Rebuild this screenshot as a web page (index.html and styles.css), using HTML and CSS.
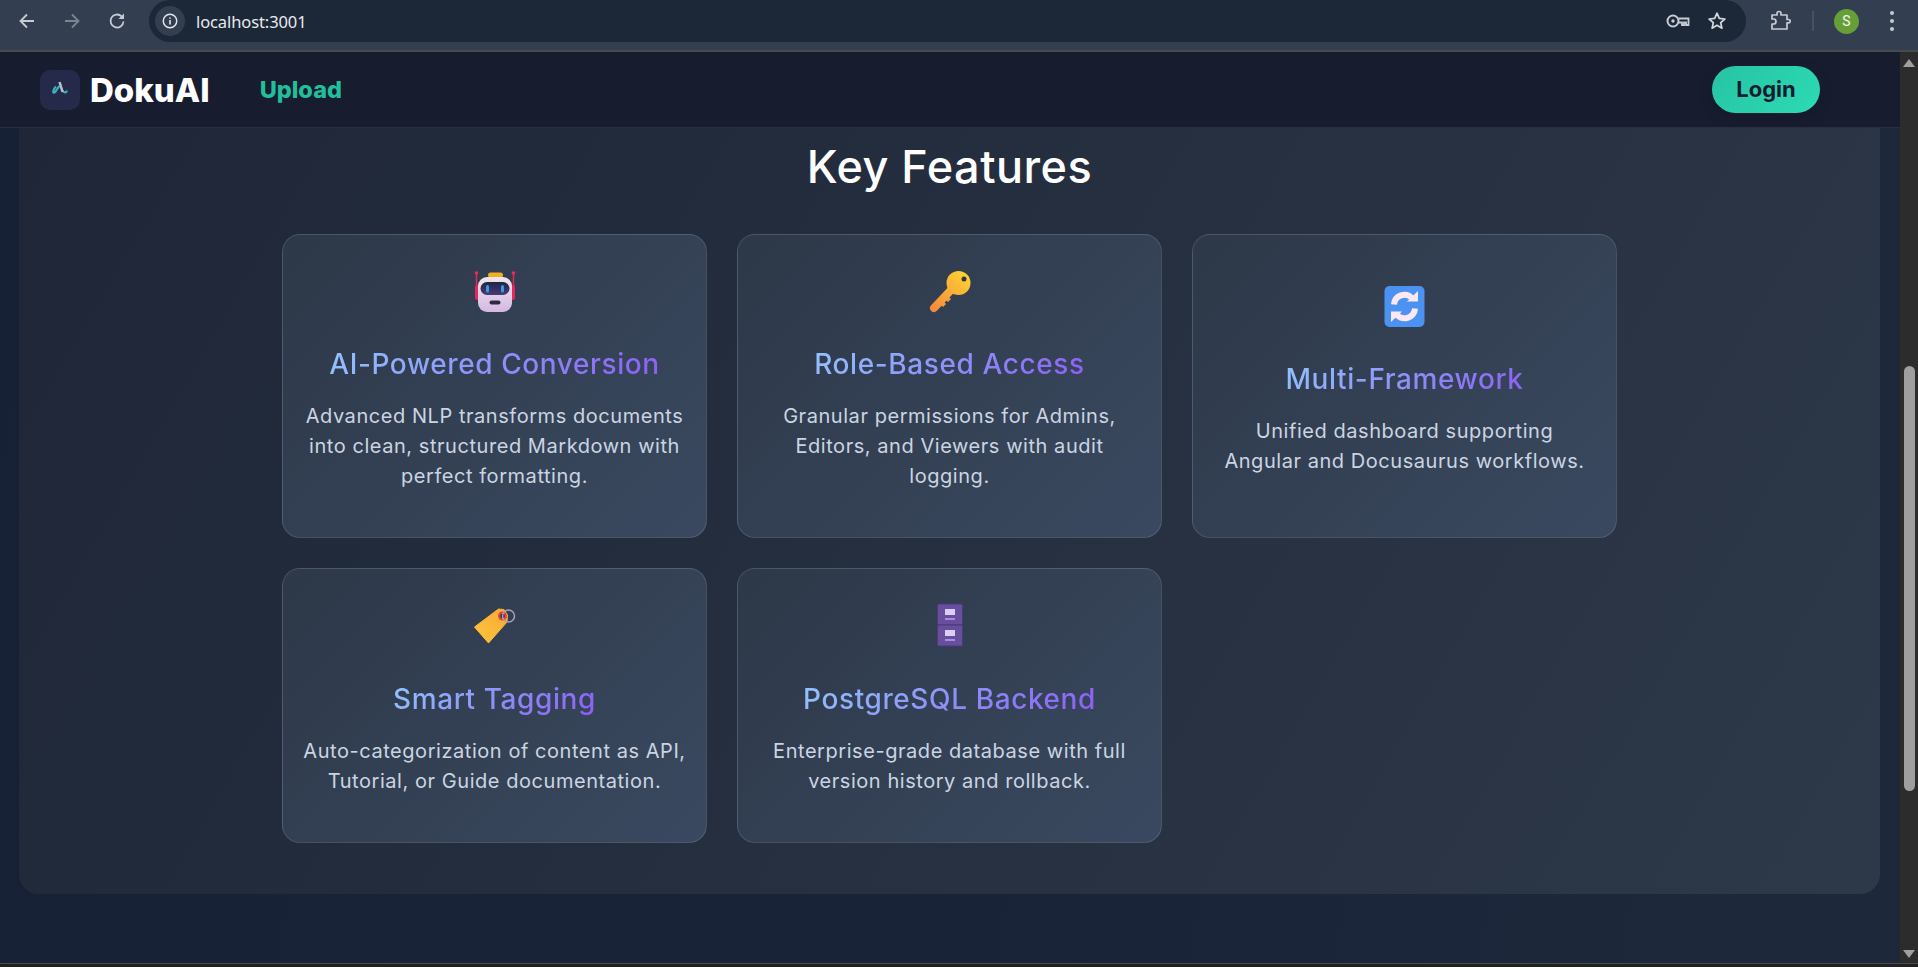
FILE: index.html
```html
<!DOCTYPE html>
<html lang="en">
    <head>
        <meta charset="UTF-8" />
        <meta name="viewport" content="width=device-width, initial-scale=1.0" />
        <title>DokuAI</title>
        <link rel="stylesheet" href="styles.css">
    </head>
    <body>
        <!-- browser toolbar -->
        <div class="chrome">
            <div class="chrome-nav">
                <svg class="chrome-icon" viewBox="0 0 20 20"><path d="M17 10H4M10 3.5 3.5 10l6.500 6.500" fill="none" stroke="#c7ccd4" stroke-width="1.800"/></svg>
                <svg class="chrome-icon" viewBox="0 0 20 20"><path d="M3 10h13M10 3.500l6.500 6.500-6.500 6.500" fill="none" stroke="#7b8491" stroke-width="1.800"/></svg>
                <svg class="chrome-icon" viewBox="0 0 20 20"><path d="M16.500 10.500a6.500 6.500 0 1 1-1.900-5.100L16.500 7.300" fill="none" stroke="#c7ccd4" stroke-width="1.800"/><path d="M17 2.500V8h-5.500z" fill="#c7ccd4"/></svg>
            </div>
            <div class="omnibox">
                <span class="site-info">
                    <svg viewBox="0 0 20 20" width="18" height="18"><circle cx="10" cy="10" r="7.500" fill="none" stroke="#e3e6ea" stroke-width="1.600"/><path d="M10 9v5M10 6v1.600" stroke="#e3e6ea" stroke-width="1.800"/></svg>
                </span>
                <span class="url">localhost:3001</span>
                <div class="omnibox-actions">
                    <svg width="24" height="16" viewBox="0 0 24 16"><circle cx="7" cy="8" r="5.500" fill="none" stroke="#c7ccd4" stroke-width="2"/><circle cx="7" cy="8" r="1.700" fill="#c7ccd4"/><path d="M12.500 5.500h10V12h-2.500v-2.500h-2V12h-2V9.500h-3.500" fill="none" stroke="#c7ccd4" stroke-width="1.800"/></svg>
                    <svg width="20" height="20" viewBox="0 0 20 20"><path d="m10 2.200 2.300 5.200 5.600.6-4.200 3.700 1.200 5.500L10 14.300l-4.900 2.900 1.200-5.500L2.100 8l5.600-.6z" fill="none" stroke="#d3d7dd" stroke-width="1.700" stroke-linejoin="round"/></svg>
                </div>
            </div>
            <div class="chrome-tools">
                <svg width="22" height="22" viewBox="0 0 22 22"><path d="M3 5h5V3.500a2 2 0 0 1 4 0V5h6v4.500h1.500a1.700 1.700 0 0 1 0 3.400H18V19H3v-5h1.500a2.500 2.500 0 0 0 0-5H3z" fill="none" stroke="#c7ccd4" stroke-width="1.700" stroke-linejoin="round"/></svg>
                <span class="tool-divider"></span>
                <span class="avatar">S</span>
                <span class="kebab"><i></i><i></i><i></i></span>
            </div>
        </div>

        <div class="viewport">
            <div class="page">
                <header class="site-header">
                    <div class="brand">
                        <span class="brand-mark">
                            <svg width="40" height="40" viewBox="0 0 40 40">
                                <path d="M16 16.500c-1.500 1.200-2.500 3-2.800 5-.1 1.300.8 1.600 2 .5l4-6" fill="none" stroke="#3cb4bd" stroke-width="2.200"/>
                                <path d="M20 13c1 4 2 9 5 9.500 1 .1 1.800-.6 1.800-2" fill="none" stroke="#3cb4bd" stroke-width="2"/>
                                <path d="M19.500 12 22.500 22" fill="none" stroke="#b9bec8" stroke-width="2.400"/>
                            </svg>
                        </span>
                        <span class="brand-name">DokuAI</span>
                    </div>
                    <a class="nav-link" href="#">Upload</a>
                    <button class="login-btn">Login</button>
                </header>

                <main class="content">
                    <section class="features">
                        <h2 class="features-title">Key Features</h2>
                        <div class="feature-grid">
                            <div class="feature-card">
                                <div class="feature-icon">
                                    <svg width="48" height="48" viewBox="0 0 48 48">
                                        <defs>
                                            <linearGradient id="robotHead" x1="0" y1="0" x2="0" y2="1"><stop offset="0" stop-color="#f0e6ea"/><stop offset="1" stop-color="#d5b8e4"/></linearGradient>
                                            <linearGradient id="robotFace" x1="0" y1="0" x2="0" y2="1"><stop offset="0" stop-color="#1f2544"/><stop offset="1" stop-color="#4b3a7a"/></linearGradient>
                                        </defs>
                                        <path d="M5.500 6v26M42.500 6v26" stroke="#e8265e" stroke-width="1.500"/>
                                        <circle cx="5.500" cy="6" r="1.800" fill="#f0285f"/>
                                        <circle cx="42.500" cy="6" r="1.800" fill="#f0285f"/>
                                        <rect x="4" y="18" width="6" height="15" rx="2.500" fill="#e8265e"/>
                                        <rect x="38" y="18" width="6" height="15" rx="2.500" fill="#e8265e"/>
                                        <rect x="17" y="5.500" width="15" height="5" rx="2.500" fill="#f2b01e"/>
                                        <rect x="7" y="10" width="34" height="35" rx="9" fill="url(#robotHead)"/>
                                        <rect x="9.500" y="15" width="29" height="13" rx="6.500" fill="url(#robotFace)"/>
                                        <rect x="15" y="18" width="3" height="7.500" rx="1.500" fill="#2e9fe8"/>
                                        <rect x="30" y="18" width="3" height="7.500" rx="1.500" fill="#2e9fe8"/>
                                        <rect x="18.500" y="33.500" width="11" height="4" rx="2" fill="#2d2a45"/>
                                    </svg>
                                </div>
                                <h3 class="feature-name">AI-Powered Conversion</h3>
                                <p class="feature-text">Advanced NLP transforms documents into clean, structured Markdown with perfect formatting.</p>
                            </div>

                            <div class="feature-card">
                                <div class="feature-icon">
                                    <svg width="48" height="48" viewBox="0 0 48 48">
                                        <defs>
                                            <linearGradient id="keyFill" gradientUnits="userSpaceOnUse" x1="40" y1="6" x2="6" y2="42"><stop offset="0" stop-color="#ffd034"/><stop offset="1" stop-color="#f58a3c"/></linearGradient>
                                        </defs>
                                        <path d="M8 41 26 22" stroke="url(#keyFill)" stroke-width="8" stroke-linecap="round"/>
                                        <path d="M15 38l3-3 2 2-3 3zM20 33l3-3 2 2-3 3z" fill="#f79c3b"/>
                                        <circle cx="32.500" cy="16" r="12" fill="url(#keyFill)"/>
                                        <circle cx="38" cy="12" r="2.500" fill="#2b3647"/>
                                    </svg>
                                </div>
                                <h3 class="feature-name">Role-Based Access</h3>
                                <p class="feature-text">Granular permissions for Admins, Editors, and Viewers with audit logging.</p>
                            </div>

                            <div class="feature-card">
                                <div class="feature-icon">
                                    <svg width="48" height="48" viewBox="0 0 48 48">
                                        <rect x="3.500" y="4" width="40" height="41" rx="5" fill="#4c93f1"/>
                                        <path d="M13 22.500a10.500 10.500 0 0 1 18-6.500" fill="none" stroke="#fbe8f4" stroke-width="6"/>
                                        <path d="M26 19.500h11V9z" fill="#fbe8f4"/>
                                        <path d="M34 26.500a10.500 10.500 0 0 1-18 6.500" fill="none" stroke="#fbe8f4" stroke-width="6"/>
                                        <path d="M21 29.500H10V40z" fill="#fbe8f4"/>
                                    </svg>
                                </div>
                                <h3 class="feature-name">Multi-Framework</h3>
                                <p class="feature-text">Unified dashboard supporting<br>Angular and Docusaurus workflows.</p>
                            </div>

                            <div class="feature-card">
                                <div class="feature-icon">
                                    <svg width="48" height="48" viewBox="0 0 48 48">
                                        <defs>
                                            <linearGradient id="tagFill" x1="0" y1="1" x2="1" y2="0"><stop offset="0" stop-color="#ffc53d"/><stop offset="1" stop-color="#f7a935"/></linearGradient>
                                        </defs>
                                        <path d="M27.500 7 33 7.500 36.500 13 36 20 17.500 41 3.500 25z" fill="url(#tagFill)" stroke="url(#tagFill)" stroke-linejoin="round"/>
                                        <circle cx="31.500" cy="14" r="4.500" fill="#e8403f"/>
                                        <circle cx="31.500" cy="14" r="2.300" fill="#2d3748"/>
                                        <circle cx="37.500" cy="14" r="6" fill="none" stroke="#a8a0b8" stroke-width="1.500"/>
                                    </svg>
                                </div>
                                <h3 class="feature-name">Smart Tagging</h3>
                                <p class="feature-text">Auto-categorization of content as API, Tutorial, or Guide documentation.</p>
                            </div>

                            <div class="feature-card">
                                <div class="feature-icon">
                                    <svg width="48" height="48" viewBox="0 0 48 48">
                                        <rect x="11.500" y="2" width="25" height="21" rx="1.500" fill="#674f9d" stroke="#4c3a78"/>
                                        <rect x="11.500" y="23" width="25" height="21" rx="1.500" fill="#674f9d" stroke="#4c3a78"/>
                                        <rect x="19" y="7" width="10" height="6" fill="#dccdf2"/>
                                        <rect x="19" y="16" width="10" height="2" fill="#a88ae0"/>
                                        <rect x="19" y="28" width="10" height="6" fill="#dccdf2"/>
                                        <rect x="19" y="37" width="10" height="2" fill="#a88ae0"/>
                                    </svg>
                                </div>
                                <h3 class="feature-name">PostgreSQL Backend</h3>
                                <p class="feature-text">Enterprise-grade database with full version history and rollback.</p>
                            </div>
                        </div>
                    </section>
                </main>
            </div>

            <div class="scrollbar">
                <span class="arrow-up"></span>
                <div class="scroll-track"><div class="scroll-thumb"></div></div>
                <span class="arrow-down"></span>
            </div>
        </div>

        <div class="bottom-strip"></div>
    </body>
</html>
```

FILE: styles.css
```css
* {
    box-sizing: border-box;
}
html,
body {
    height: 100%;
    margin: 0;
}
body {
    display: flex;
    flex-direction: column;
    overflow: hidden;
    font-family: Inter, "Liberation Sans", sans-serif;
    background: #171c2f;
}

/* browser toolbar */
.chrome {
    display: flex;
    align-items: center;
    flex: none;
    height: 52px;
    padding-bottom: 8px;
    background: #333f50;
    border-bottom: 2px solid #474a4f;
}
.chrome-nav {
    display: flex;
    gap: 25px;
    width: 149px;
    padding-left: 17px;
}
.chrome-icon {
    width: 20px;
    height: 20px;
}
.omnibox {
    display: flex;
    align-items: center;
    width: 1597px;
    height: 42px;
    padding: 0 19px 0 6px;
    background: #1c2838;
    border-radius: 21px;
}
.site-info {
    display: flex;
    align-items: center;
    justify-content: center;
    width: 30px;
    height: 30px;
    background: #333f50;
    border-radius: 50%;
}
.url {
    margin-left: 11px;
    padding-top: 1px;
    color: #e8eaed;
    font-family: "Noto Sans", sans-serif;
    font-size: 16.5px;
    line-height: 24px;
    letter-spacing: -0.1px;
}
.omnibox-actions {
    display: flex;
    align-items: center;
    gap: 17px;
    margin-left: auto;
}
.chrome-tools {
    display: flex;
    align-items: center;
    padding-left: 23px;
}
.tool-divider {
    width: 2px;
    height: 20px;
    margin: 0 20px 0 21px;
    background: #47525f;
}
.avatar {
    display: flex;
    align-items: center;
    justify-content: center;
    width: 25px;
    height: 25px;
    color: #f4f6f1;
    font-family: Roboto, sans-serif;
    font-size: 14px;
    background: #669f37;
    border-radius: 50%;
}
.kebab {
    display: flex;
    flex-direction: column;
    gap: 4px;
    margin-left: 31px;
}
.kebab i {
    width: 4px;
    height: 4px;
    background: #c7ccd4;
    border-radius: 50%;
}

/* page area */
.viewport {
    display: flex;
    flex: 1;
    min-height: 0;
}
.page {
    display: flex;
    flex: 1;
    flex-direction: column;
    min-width: 0;
    background: linear-gradient(100deg, #162136 0%, #1a2439 60%, #1d293b 100%);
}
.site-header {
    display: flex;
    align-items: center;
    flex: none;
    height: 76px;
    padding: 0 80px 0 40px;
    background: #171c2f;
    border-bottom: 1px solid #2a2f45;
}
.brand {
    display: flex;
    align-items: center;
    gap: 10px;
}
.brand-mark {
    width: 40px;
    height: 40px;
    background: #25294a;
    border-radius: 10px;
}
.brand-name {
    color: #fff;
    font-size: 33px;
    font-weight: 800;
}
.nav-link {
    margin-left: 50px;
    color: #22bf9b;
    font-size: 23.5px;
    font-weight: 800;
    text-decoration: none;
}
.login-btn {
    width: 108px;
    height: 47px;
    margin-left: auto;
    padding: 0 0 2px;
    color: #171c2f;
    font-family: inherit;
    font-size: 22px;
    font-weight: 700;
    background: linear-gradient(135deg, #26c4a4, #2ddab4);
    border: 0;
    border-radius: 24px;
    box-shadow: 0 4px 14px rgba(0, 0, 0, 0.15);
}
.content {
    flex: 1;
    padding: 0 20px 0 19px;
}
.features {
    height: 766px;
    padding-top: 12px;
    background: linear-gradient(120deg, #1e2638 0%, #2d3848 100%);
    border-radius: 0 0 20px 20px;
}
.features-title {
    margin: 0 0 40px;
    color: #fff;
    font-size: 45px;
    font-weight: 500;
    letter-spacing: 0.5px;
    line-height: 54px;
    text-align: center;
}
.feature-grid {
    display: grid;
    grid-template-columns: repeat(3, 425px);
    grid-template-rows: 304px 275px;
    justify-content: center;
    gap: 30px;
}
.feature-card {
    display: flex;
    flex-direction: column;
    justify-content: center;
    padding: 32px 16px;
    text-align: center;
    background: linear-gradient(135deg, #2d3848 0%, #3a4960 100%);
    border: 1px solid rgba(255, 255, 255, 0.12);
    border-radius: 18px;
}
.feature-icon {
    display: flex;
    justify-content: center;
    height: 54px;
    margin-bottom: 24px;
}
.feature-name {
    align-self: center;
    margin: 0 0 18px;
    font-size: 28px;
    font-weight: 500;
    letter-spacing: 0.6px;
    line-height: 38px;
    color: transparent;
    background: linear-gradient(135deg, #93c5fd, #8b5cf6);
    -webkit-background-clip: text;
    background-clip: text;
}
.feature-text {
    margin: 0 0 14px;
    color: #cbd5e1;
    font-size: 20px;
    letter-spacing: 0.55px;
    line-height: 30px;
}

/* scrollbar */
.scrollbar {
    display: flex;
    flex: none;
    flex-direction: column;
    align-items: center;
    width: 18px;
    padding: 7px 0 5px;
    background: #2c2c2c;
}
.arrow-up,
.arrow-down {
    width: 0;
    height: 0;
    border-left: 6px solid transparent;
    border-right: 6px solid transparent;
}
.arrow-up {
    border-bottom: 8px solid #9f9f9f;
}
.arrow-down {
    border-top: 8px solid #9f9f9f;
}
.scroll-track {
    flex: 1;
    width: 100%;
    padding: 299px 3px 0 4px;
}
.scroll-thumb {
    height: 425px;
    background: #9f9f9f;
    border-radius: 6px;
}
.bottom-strip {
    flex: none;
    height: 4px;
    background: #202020;
    border-top: 1px solid #474a4f;
}
```
